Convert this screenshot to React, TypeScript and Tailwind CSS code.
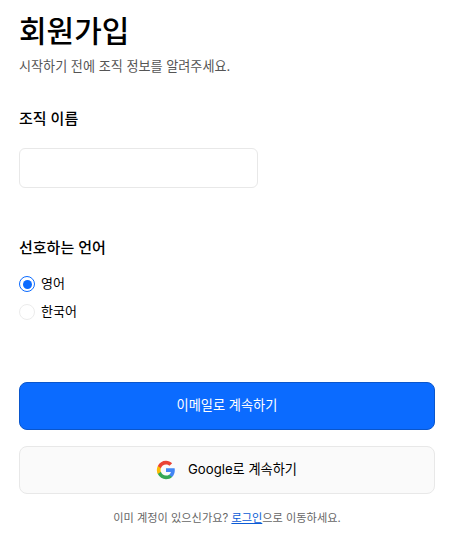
import { useState } from "react";

const font = "font-['Inter','Noto_Sans_CJK_KR',sans-serif]";

function GoogleIcon() {
  return (
    <svg width="20" height="20" viewBox="0 0 24 24" className="-mx-px" aria-hidden>
      <path fill="#4285F4" d="M22.56 12.25c0-.78-.07-1.53-.2-2.25H12v4.26h5.92c-.26 1.37-1.04 2.53-2.21 3.31v2.77h3.57c2.08-1.92 3.28-4.74 3.28-8.09z" />
      <path fill="#34A853" d="M12 23c2.97 0 5.46-.98 7.28-2.66l-3.57-2.77c-.98.66-2.23 1.06-3.71 1.06-2.86 0-5.29-1.93-6.16-4.53H2.18v2.84C3.99 20.53 7.7 23 12 23z" />
      <path fill="#FBBC05" d="M5.84 14.09c-.22-.66-.35-1.36-.35-2.09s.13-1.43.35-2.09V7.07H2.18C1.43 8.55 1 10.22 1 12s.43 3.45 1.18 4.93l2.85-2.22.81-.62z" />
      <path fill="#EA4335" d="M12 5.38c1.62 0 3.06.56 4.21 1.64l3.15-3.15C17.45 2.09 14.97 1 12 1 7.7 1 3.99 3.47 2.18 7.07l3.66 2.84c.87-2.6 3.3-4.53 6.16-4.53z" />
    </svg>
  );
}

export default function App() {
  const [lang, setLang] = useState("en");

  return (
    <div className={`${font} min-h-[556px] bg-white px-[19px] text-black`}>
      <h1 className="pt-[12px] text-[30px] leading-[38px] font-medium">회원가입</h1>
      <p className="mt-[6px] text-[13.1px] leading-[20px] text-[#555]">시작하기 전에 조직 정보를 알려주세요.</p>

      <label htmlFor="org" className="mt-[32px] block text-[15px] leading-[22px] font-medium">
        조직 이름
      </label>
      <input
        id="org"
        className="mt-[18px] block h-[40px] w-[239px] rounded-md border border-[#e8e8e8] bg-white px-3 text-sm outline-none"
      />

      <div className="mt-[49px] text-[15px] leading-[22px] font-medium">선호하는 언어</div>
      <div className="mt-[15px] flex flex-col gap-[8px]">
        <label className="flex h-[20px] items-center gap-[6px] text-[13px]">
          <input type="radio" name="lang" className="sr-only" checked={lang === "en"} onChange={() => setLang("en")} />
          <span className="flex size-[16px] items-center justify-center rounded-full border border-[#0b6bff]">
            {lang === "en" ? <span className="size-[9px] rounded-full bg-[#0b6bff]" /> : null}
          </span>
          영어
        </label>
        <label className="flex h-[20px] items-center gap-[6px] text-[13px]">
          <input type="radio" name="lang" className="sr-only" checked={lang === "ko"} onChange={() => setLang("ko")} />
          <span className="flex size-[16px] items-center justify-center rounded-full border border-[#ececec]">
            {lang === "ko" ? <span className="size-[9px] rounded-full bg-[#0b6bff]" /> : null}
          </span>
          한국어
        </label>
      </div>

      <button
        type="button"
        className="mt-[60px] flex h-[48px] w-full items-center justify-center rounded-lg border border-[#0a56cc] bg-[#0b6bff] text-[13.2px] text-white"
      >
        이메일로 계속하기
      </button>
      <button
        type="button"
        className="mt-[16px] flex h-[48px] w-full items-center justify-center gap-[13px] rounded-lg border border-[#e8e8e8] bg-[#fafafa] text-[13.2px] text-black"
      >
        <GoogleIcon />
        Google로 계속하기
      </button>
      <p className="mt-[15px] text-center text-[11.2px] leading-[18px] text-[#666]">
        이미 계정이 있으신가요?{" "}
        <a href="#" className="text-[#0a5bd6] underline">
          로그인
        </a>
        으로 이동하세요.
      </p>
    </div>
  );
}
